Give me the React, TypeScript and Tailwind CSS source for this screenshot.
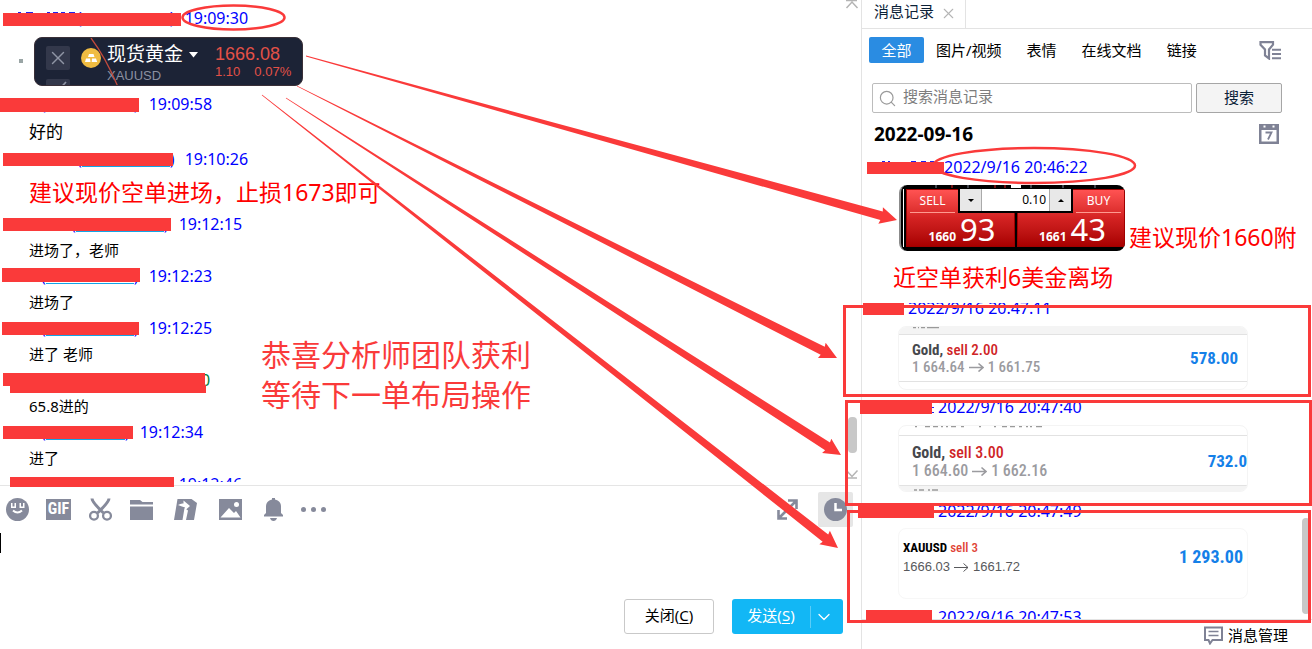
import * as React from "react";
import { ChevronDown, Search, X } from "lucide-react";

interface ChatMessage {
  time: string;
  indent: string;
  underline: string;
  body?: string;
  bodyClass?: string;
  card?: boolean;
}

const messages: ChatMessage[] = [
  { time: "19:09:30", indent: "pl-[77px]", underline: "w-[88px]", card: true },
  { time: "19:09:58", indent: "pl-[41px]", underline: "w-[88px]", body: "好的", bodyClass: "h-[29px] text-[17px]" },
  {
    time: "19:10:26",
    indent: "pl-[77px]",
    underline: "w-[88px]",
    body: "建议现价空单进场，止损1673即可",
    bodyClass: "h-[39px] pt-px text-[23px] text-[#ff0000]",
  },
  { time: "19:12:15", indent: "pl-[71px]", underline: "w-[88px]", body: "进场了，老师" },
  { time: "19:12:23", indent: "pl-[41px]", underline: "w-[88px]", body: "进场了" },
  { time: "19:12:25", indent: "pl-[41px]", underline: "w-[88px]", body: "进了 老师" },
  { time: "", indent: "pl-[201px]", underline: "w-0", body: "65.8进的" },
  { time: "19:12:34", indent: "pl-[41px]", underline: "w-[79px]", body: "进了" },
  { time: "19:12:46", indent: "pl-[71px]", underline: "w-[88px]" },
];

const filters = ["图片/视频", "表情", "在线文档", "链接"];

// x, y, width, height
const redactions = [
  [3, 13, 178, 13],
  [0, 98, 139, 14],
  [3, 153, 170, 13],
  [3, 218, 168, 13],
  [2, 268, 138, 14],
  [2, 322, 137, 13],
  [3, 373, 202, 13],
  [10, 385, 196, 8],
  [3, 426, 130, 13],
  [10, 477, 164, 10],
  [867, 162, 77, 12],
  [863, 303, 41, 12],
  [860, 402, 72, 12],
  [858, 505, 76, 13],
  [866, 610, 66, 12],
];

const frames = [
  [844, 306, 466, 90],
  [846, 401, 465, 104],
  [848, 511, 462, 111],
];

const arrows = [
  [306, 56, 897, 220],
  [297, 86, 837, 358],
  [286, 98, 841, 455],
  [262, 95, 838, 548],
];

function arrowPoints([x1, y1, x2, y2]: number[]) {
  const len = Math.hypot(x2 - x1, y2 - y1);
  const ux = (x2 - x1) / len;
  const uy = (y2 - y1) / len;
  const at = (along: number, side: number) =>
    `${x1 + ux * along - uy * side},${y1 + uy * along + ux * side}`;
  const neck = len - 16;
  return [
    at(0, 0.4),
    at(neck, 4.5),
    at(neck - 1, 8.5),
    at(len, 0),
    at(neck - 1, -8.5),
    at(neck, -4.5),
    at(0, -0.4),
  ].join(" ");
}

function Annotations() {
  return (
    <>
      <svg
        className="pointer-events-none absolute left-0 top-0 z-20"
        width="1312"
        height="649"
        fill="none"
        aria-hidden="true"
      >
        {/* tops of the names that stick out over the bars */}
        <path
          d="M18 12.5h3M26 12.5h7M47 12.5h3M53 12.5h5M61 12.5h4M69 12.5h6M882 161.500h3M888 161.500h2M911 161.500h5M921 161.500h5M930 161.500h4M932 407.500h2M932 412.500h2"
          stroke="#2222ee"
        />
        <g fill="#fa3a3a">
          {redactions.map(([x, y, w, h]) => (
            <rect key={`${x}-${y}`} x={x} y={y} width={w} height={h} />
          ))}
          {arrows.map((a) => (
            <polygon key={a.join()} points={arrowPoints(a)} />
          ))}
        </g>
        <g stroke="#fa3a3a">
          {frames.map(([x, y, w, h]) => (
            <rect key={y} x={x + 0.5} y={y + 0.5} width={w - 1} height={h - 1} strokeWidth="3" />
          ))}
          <ellipse cx="233.5" cy="17.5" rx="51" ry="12" strokeWidth="2.5" />
          <ellipse cx="1034" cy="165.500" rx="101" ry="17.500" strokeWidth="2.500" />
        </g>
      </svg>
      <p className="pointer-events-none absolute left-[261px] top-[335px] z-20 whitespace-pre text-[30px] leading-10 text-[#fa3a3a]">
        {"恭喜分析师团队获利\n等待下一单布局操作"}
      </p>
    </>
  );
}

function GoldCard() {
  return (
    <div className="flex h-[60px] items-center pl-[19px]">
      <span className="h-1 w-1 bg-[#9aa5a5]" />
      <div className="relative ml-[11px] flex h-[49px] w-[269px] overflow-hidden rounded-lg border border-[#3a3038] bg-[#1c2336]">
        <div className="ml-[11px] mt-2 flex flex-col gap-[9px]">
          <button className="flex h-6 w-6 shrink-0 items-center justify-center rounded-[2px] bg-[#33384b] text-[#9095a5]" aria-label="取消">
            <X size={22} strokeWidth={1.5} />
          </button>
          <span className="flex h-6 w-6 shrink-0 justify-center rounded-[2px] bg-[#33384b]">
            <svg width="20" height="20" stroke="#9095a5" strokeWidth="1.7" fill="none">
              <path d="M3 9l5 5L18 3" />
            </svg>
          </span>
        </div>
        <svg className="ml-[11px] mt-[10px] shrink-0" width="20" height="20">
          <circle cx="10" cy="10" r="10" fill="#f0bc42" />
          <path d="M8 6h4.500l1 3h-6.500zM5 10.500h4l.5 3.500h-5.500zM11 10.500h4l1.200 3.500h-5.500z" fill="#fff" />
        </svg>
        <div className="ml-[6px] flex flex-col">
          <div className="flex h-[34px] items-center gap-[6px] text-[19px] text-white">
            现货黄金
            <svg width="9" height="6">
              <path d="M0 0h9L4.500 5.500z" fill="#fff" />
            </svg>
          </div>
          <span className="-mt-[2px] font-['Liberation_Sans',sans-serif] text-[13px] leading-3 text-[#8b90a1]">XAUUSD</span>
        </div>
        <div className="ml-[17px] mt-[6px] font-['Liberation_Sans',sans-serif] text-[#e35147]">
          <div className="text-[18px] leading-5">1666.08</div>
          <div className="flex gap-[14px] text-[13px] leading-4">
            <span>1.10</span>
            <span>0.07%</span>
          </div>
        </div>
        <svg className="absolute left-[55px] top-0" width="32" height="49" fill="none" stroke="#c04a3c" strokeWidth="1.300">
          <path d="M1 0Q16 20 28 49" />
        </svg>
      </div>
    </div>
  );
}

function MessageRow({ message }: { message: ChatMessage }) {
  return (
    <li>
      <div className={`flex h-[26px] items-center text-[16px] text-[#0000ff] ${message.indent}`}>
        {message.time ? (
          <>
            <span>(</span>
            <span className={`h-[15px] border-b border-[#12a5e8] ${message.underline}`} />
            <span>)</span>
            <time className="ml-[10px]">{message.time}</time>
          </>
        ) : (
          <span className="text-[#008040]">0</span>
        )}
      </div>
      {message.card && <GoldCard />}
      {message.body && (
        <p className={`flex items-center whitespace-pre pl-[29px] ${message.bodyClass || "h-[26px] text-[15px]"}`}>{message.body}</p>
      )}
    </li>
  );
}

function ScrollEnd({ up }: { up?: boolean }) {
  return (
    <svg width="14" height="10" fill="none" stroke="#b4b4b4" strokeWidth="1.500">
      {up ? <path d="M1 .500h11M1.500 8l5.500-6 5.500 6" /> : <path d="M1 9h11M1.500 1.500l5.500 6 5.500-6" />}
    </svg>
  );
}

function Toolbar() {
  return (
    <div className="flex h-12 shrink-0 items-center pb-[2px] pl-[6px] pr-2 text-[#868a9b]">
      <button aria-label="表情">
        <svg width="23" height="23" viewBox="0 0 23 23">
          <circle cx="11.500" cy="11.500" r="11.500" fill="currentColor" />
          <path d="M5 5h1.500v3.500h2V5H10v5H5zM13.500 5H15v3.500h2V5h1.500v5h-5z" fill="#fff" />
          <path d="M7 12.500q4.500 4 9 0" fill="none" stroke="#fff" strokeWidth="2" />
        </svg>
      </button>
      <button aria-label="GIF" className="ml-[17px] flex h-[21px] w-[25px] items-center justify-center bg-[#868a9b] font-['Roboto_Condensed',Roboto,sans-serif] text-[16px] font-bold leading-none text-white">
        GIF
      </button>
      <button aria-label="截图" className="ml-[18px]">
        <svg width="23" height="23" viewBox="0 0 23 23" fill="none" stroke="currentColor">
          <path d="M3 .500Q3 4 14.500 15M20 .500Q20 4 8.500 15" strokeWidth="3" />
          <circle cx="5" cy="17.800" r="3.900" strokeWidth="2.300" />
          <circle cx="18" cy="17.800" r="3.900" strokeWidth="2.300" />
        </svg>
      </button>
      <button aria-label="文件" className="ml-[18px]">
        <svg width="23" height="21" viewBox="0 0 23 21" fill="currentColor">
          <path d="M0 1h10l2.500 2H23v2.500H0zM0 7.500h23V21H0z" />
        </svg>
      </button>
      <button aria-label="腾讯文档" className="ml-[21px]">
        <svg width="23" height="21" viewBox="0 0 23 21">
          <path d="M3.500 0h14L23 4l-3 17h-8l2-9.500L10.500 9 8.500 21H0z" fill="currentColor" />
          <path d="M4 6q3-2 5.500-1.500V1.500L16 7l-5 4.500V8.500Q7 7 4 6z" fill="#fff" />
        </svg>
      </button>
      <button aria-label="图片" className="ml-[22px]">
        <svg width="23" height="21" viewBox="0 0 23 21" fill="currentColor">
          <path d="M0 0h23v21H0z" />
          <path d="M1.500 18.500l8.500-9.500 5 5 2-2 4.500 6.500z" fill="#fff" />
          <circle cx="17.500" cy="5.500" r="2.500" fill="#fff" />
        </svg>
      </button>
      <button aria-label="提醒" className="ml-[22px]">
        <svg width="19" height="23" viewBox="0 0 19 23" fill="currentColor">
          <path d="M8 0h3v1.500c4 .8 6 3.500 6 7V15l2 2v1.500H0V17l2-2V8.500c0-3.500 2-6.200 6-7zM6 20h7c-.5 2-1.800 3-3.500 3S6.500 22 6 20z" />
        </svg>
      </button>
      <button aria-label="更多" className="ml-[18px]">
        <svg width="25" height="5" fill="currentColor">
          <circle cx="2.500" cy="2.500" r="2.500" />
          <circle cx="12.500" cy="2.500" r="2.500" />
          <circle cx="22.500" cy="2.500" r="2.500" />
        </svg>
      </button>
      <button aria-label="展开" className="ml-auto mr-5">
        <svg width="21" height="21" viewBox="0 0 21 21" fill="none" stroke="currentColor" strokeWidth="2.600">
          <path d="M11 1.500h8.500V10M19 2l-7 7M10 19.500H1.500V11M2 19l7-7" />
        </svg>
      </button>
      <button aria-label="消息记录" className="flex h-[35px] w-[35px] items-center justify-center rounded-[2px] bg-[#e6e6e6]">
        <svg width="23" height="23" viewBox="0 0 23 23">
          <circle cx="11.500" cy="11.500" r="11.500" fill="currentColor" />
          <path d="M11.500 5v7h6.500" fill="none" stroke="#fff" strokeWidth="2.500" />
        </svg>
      </button>
    </div>
  );
}

function ChatPane() {
  return (
    <main className="flex min-w-0 flex-1 flex-col">
      <div className="flex min-h-0 flex-1 border-b border-[#e5e5e5] pb-[3px]">
        <ul className="min-w-0 flex-1 overflow-hidden pt-[5px]">
          {messages.map((message, i) => (
            <MessageRow key={i} message={message} />
          ))}
        </ul>
        <div className="flex w-4 flex-col items-start">
          <ScrollEnd up />
          <span className="ml-[3px] mt-auto h-9 w-[9px] rounded bg-[#c8c8c8]" />
          <div className="mb-[3px] mt-4">
            <ScrollEnd />
          </div>
        </div>
      </div>
      <Toolbar />
      <div className="flex h-[65px]">
        <span className="-mt-px h-5 w-px bg-black" />
        <textarea aria-label="输入消息" className="flex-1 resize-none outline-none" />
      </div>
      <div className="flex justify-end gap-[18px] pb-[15px] pr-[18px] text-[15px]">
        <button className="h-[35px] w-[90px] rounded-[3px] border border-[#c9c9c9] pb-[2px]">
          关闭(<u className="underline-offset-2">C</u>)
        </button>
        <div className="flex h-[35px] w-[111px] items-center rounded-[3px] bg-[#12b7f5] text-white">
          <button className="h-full w-[78px] pb-[2px]">
            发送(<u className="underline-offset-2">S</u>)
          </button>
          <span className="h-[22px] w-px bg-[#5bcdf8]" />
          <button aria-label="发送选项" className="flex h-full flex-1 items-center justify-center pr-[6px]">
            <ChevronDown size={20} strokeWidth={1.500} />
          </button>
        </div>
      </div>
    </main>
  );
}

function QuoteSide({ label, big, small, right }: { label: string; big: string; small: string; right?: boolean }) {
  return (
    <button className="flex flex-1 flex-col border border-[#a00000] bg-linear-to-b from-[#ff5252] via-[#d42222] to-[#a80000] text-white">
      <span className={`mx-[3px] flex h-[23px] w-[45px] shrink-0 items-center justify-center border-b border-[#ff9a90] text-[12px] leading-none ${right ? "self-end" : ""}`}>
        {label}
      </span>
      <span className="flex h-[33px] items-baseline gap-1 self-end pr-[18px]">
        <b className="text-[12px] leading-none">{small}</b>
        <span className="text-[31px] leading-[33px]">{big}</span>
      </span>
    </button>
  );
}

function QuoteCard() {
  return (
    <div className="relative flex h-[66px] w-[226px] shrink-0 gap-[2px] overflow-hidden rounded-lg border-l-2 border-[#8b8b8b] bg-black py-1 pl-[5px]">
      <span className="absolute left-[2px] top-1 h-[58px] w-px bg-white" />
      <svg className="absolute left-0 top-0" width="224" height="3">
        <path d="M35 0v3M67 0v3M130 0v3M162 0v3M194 0v3" stroke="#7d8696" />
        <path d="M51 0v3M94 0v3M104 0v3" stroke="#d22" />
        <path d="M110 0h10v3h-10z" fill="#fff" />
      </svg>
      <QuoteSide label="SELL" small="1660" big="93" />
      <QuoteSide label="BUY" small="1661" big="43" right />
      <div className="absolute left-[57px] top-1 flex h-6 w-[115px] items-stretch border-2 border-t-0 border-black bg-white text-[12px]">
        <button aria-label="减少" className="flex w-[22px] items-center justify-center border-r border-[#aaa] bg-[#e8e8e8]">
          <svg width="6" height="3">
            <path d="M0 0h6L3 3z" />
          </svg>
        </button>
        <input aria-label="手数" defaultValue="0.10" className="min-w-0 flex-1 pr-[3px] text-right outline-none" />
        <button aria-label="增加" className="flex w-[22px] items-center justify-center border-l border-[#aaa] bg-[#e8e8e8]">
          <svg width="6" height="3">
            <path d="M0 3h6L3 0z" />
          </svg>
        </button>
      </div>
    </div>
  );
}

function RecordTime({ children, className }: { children: string; className: string }) {
  return (
    <div className={`overflow-hidden text-[16px] text-[#0000ff] ${className}`}>
      <time>{children}</time>
    </div>
  );
}

function PriceMove({ from, to, thin }: { from: string; to: string; thin?: boolean }) {
  return (
    <div className="flex items-center gap-1">
      {from}
      <svg width="15" height="10" fill="none" stroke="currentColor" strokeWidth={thin ? 1 : 1.6}>
        <path d="M0 5.500h14M9.500 1.500l4.500 4-4.500 4" />
      </svg>
      {to}
    </div>
  );
}

// Slivers of the neighbouring rows that the photo crop left visible
function CropMarks({ d }: { d: string }) {
  return (
    <svg className="block" width="160" height="2" stroke="#9a9a9a" strokeWidth="1.500">
      <path d={d} />
    </svg>
  );
}

interface TradeProps {
  side: string;
  from: string;
  to: string;
  profit: string;
  className: string;
  textClass: string;
  profitClass: string;
  top: React.ReactNode;
  bottom?: React.ReactNode;
}

function TradeCard({ side, from, to, profit, className, textClass, profitClass, top, bottom }: TradeProps) {
  return (
    <div className={`ml-9 flex w-[350px] flex-col overflow-hidden rounded-lg border border-[#f4f4f4] font-['Roboto_Condensed','Liberation_Sans_Narrow',Roboto,sans-serif] ${className}`}>
      {top}
      <div className="flex flex-1 items-center justify-between border-y border-[#e2e2e2] pl-[13px]">
        <div className={textClass}>
          <div className="font-bold text-[#46484d]">
            Gold, <span className="font-medium text-[#cf2426]">{side}</span>
          </div>
          <div className="font-medium text-[#9b9b9f]">
            <PriceMove from={from} to={to} />
          </div>
        </div>
        <b className={`text-[#1580e8] ${profitClass}`}>{profit}</b>
      </div>
      {bottom}
    </div>
  );
}

function HistoryPane() {
  return (
    <aside className="flex w-[451px] shrink-0 flex-col border-l border-[#e3e3e3]">
      <div className="flex h-[29px] shrink-0 border-b border-[#e3e3e3]">
        <div className="flex w-[104px] items-center gap-[6px] border-r border-[#e3e3e3] pb-[5px] pl-3 text-[15px] text-[#0c2238]">
          消息记录
          <button aria-label="关闭" className="mt-1 text-[#b5b5b5]">
            <X size={17} strokeWidth={1.500} />
          </button>
        </div>
      </div>
      <nav className="flex h-[42px] shrink-0 items-center pl-[7px] pr-[30px] text-[15px]">
        <button className="mr-3 h-[26px] w-[55px] rounded-[2px] bg-[#2a8ce2] text-white">全部</button>
        <div className="flex gap-[25px]">
          {filters.map((f) => (
            <button key={f}>{f}</button>
          ))}
        </div>
        <button aria-label="筛选" className="ml-auto text-[#7f8295]">
          <svg width="23" height="19" viewBox="0 0 23 19" fill="none" stroke="currentColor">
            <path d="M1.500 1.200h12.500v2.500L10 8.500v9L6 14.500v-6L1.500 3.700z" strokeWidth="2.200" />
            <path d="M13 8.800h9M13 13h9M13 17.200h9" strokeWidth="2" />
          </svg>
        </button>
      </nav>
      <div className="flex shrink-0 gap-1 pl-[10px] pr-[30px] pt-3 text-[15px]">
        <label className="flex h-[30px] min-w-0 flex-1 items-center gap-[6px] rounded-[2px] border border-[#bcbcbc] pl-[5px]">
          <Search size={19} strokeWidth={1.500} className="text-[#9a9a9a]" />
          <input placeholder="搜索消息记录" aria-label="搜索消息记录" className="min-w-0 flex-1 pb-[3px] outline-none placeholder:text-[#7d7d7d]" />
        </label>
        <button className="h-[30px] w-[86px] rounded-[2px] border border-[#a6a6a6] bg-[#f4f4f4] pb-[2px] text-[#0c2238]">搜索</button>
      </div>
      <div className="flex h-[42px] shrink-0 items-center justify-between pl-3 pr-[33px]">
        <h2 className="text-[19px] font-bold">2022-09-16</h2>
        <button aria-label="选择日期" className="text-[#7f8295]">
          <svg width="20" height="20" viewBox="0 0 20 20">
            <path d="M0 0h20v20H0z" fill="currentColor" />
            <path d="M2.500 6h15v11.500h-15zM4.500 1.500h2v2h-2zM13.500 1.500h2v2h-2z" fill="#fff" />
            <path d="M6.500 8.500h6L9 15.500" fill="none" stroke="currentColor" strokeWidth="1.800" />
          </svg>
        </button>
      </div>
      <div className="flex min-h-0 flex-1 border-b border-[#e3e3e3]">
        <div className="min-w-0 flex-1 overflow-hidden">
          <RecordTime className="h-[25px] pl-[82px] leading-[25px]">2022/9/16 20:46:22</RecordTime>
          <div className="flex pl-[37px] pt-[5px]">
            <QuoteCard />
            <p className="-mr-3 ml-1 mt-[39px] whitespace-nowrap text-[23px] leading-[26px] text-[#ff0000]">建议现价1660附</p>
          </div>
          <p className="pl-[31px] text-[23px] leading-[52px] text-[#ff0000]">近空单获利6美金离场</p>

          <RecordTime className="h-[13px] pl-[46px] leading-[10px]">2022/9/16 20:47:11</RecordTime>
          <TradeCard
            side="sell 2.00"
            from="1 664.64"
            to="1 661.75"
            profit="578.00"
            className="mt-[10px] h-16"
            textClass="pt-px text-[15px] leading-[17px]"
            profitClass="pr-[9px] pt-px text-[17px]"
            top={
              <div className="h-[7px] bg-[#f4f4f4] pl-[14px]">
                <CropMarks d="M0 .500h3M5 .500h1M8 .500h4M14 .500h12" />
              </div>
            }
            bottom={<div className="h-[7px]" />}
          />

          <RecordTime className="mt-[13px] h-[13px] pl-[76px] leading-[8px]">2022/9/16 20:47:40</RecordTime>
          <TradeCard
            side="sell 3.00"
            from="1 664.60"
            to="1 662.16"
            profit="732.0"
            className="mt-[9px] h-[67px]"
            textClass="pt-[2px] text-[16px] leading-[18px]"
            profitClass="pt-[2px] text-[17px]"
            top={
              <div className="h-[9px] pl-[14px]">
                <CropMarks d="M2 .500h2M12 .500h5M20 .500h5M28 .500h2M33 .500h2M38 .500h5M48 .500h3M66 .500h2M81 .500h2M89 .500h5M97 .500h5M106 .500h3M113 .500h2M117 .500h2M123 .500h6" />
              </div>
            }
            bottom={
              <div className="flex h-[5px] items-end bg-[#f4f4f4] pl-[14px]">
                <CropMarks d="M1 1h3M6 1h5M15 1h2M19 1h6" />
              </div>
            }
          />

          <RecordTime className="mt-[14px] h-[13px] pl-[76px] leading-[10px]">2022/9/16 20:47:49</RecordTime>
          <div className="ml-9 mt-[9px] flex h-[71px] w-[350px] items-start justify-between rounded-lg border border-[#f7f7f7] px-1 pt-[9px]">
            <div className="text-[13px] leading-[19px]">
              <div className="font-['Roboto_Condensed','Liberation_Sans_Narrow',Roboto,sans-serif] font-bold">
                XAUUSD <span className="font-medium text-[#df4436]">sell 3</span>
              </div>
              <div className="font-['Liberation_Sans',sans-serif] text-[#58595c]">
                <PriceMove from="1666.03" to="1661.72" thin />
              </div>
            </div>
            <b className="font-['Roboto_Condensed','Liberation_Sans_Narrow',Roboto,sans-serif] text-[18px] leading-[38px] text-[#1580e8]">1 293.00</b>
          </div>

          <RecordTime className="mt-[7px] h-[13px] pl-[76px] leading-[22px]">2022/9/16 20:47:53</RecordTime>
        </div>
        <div className="flex w-[10px] flex-col justify-end pb-[5px]">
          <span className="h-24 w-2 rounded bg-[#c8c8c8]" />
        </div>
      </div>
      <footer className="flex h-[29px] shrink-0 items-center justify-end pr-6 pt-px">
        <button className="flex items-center gap-[5px] text-[15px]">
          <svg width="19" height="19" viewBox="0 0 19 19" fill="none" stroke="#7f8295">
            <path d="M1 1.500h17v12.500H8.500L6 17.500 4.500 14H1z" strokeWidth="2" />
            <path d="M4.500 5.500h10M4.500 9.500h10" strokeWidth="1.600" />
          </svg>
          消息管理
        </button>
      </footer>
    </aside>
  );
}

export default function App() {
  return (
    <div className="relative flex h-screen overflow-hidden bg-white font-['Noto_Sans','Noto_Sans_CJK_SC',sans-serif] text-black">
      <ChatPane />
      <HistoryPane />
      <Annotations />
    </div>
  );
}
